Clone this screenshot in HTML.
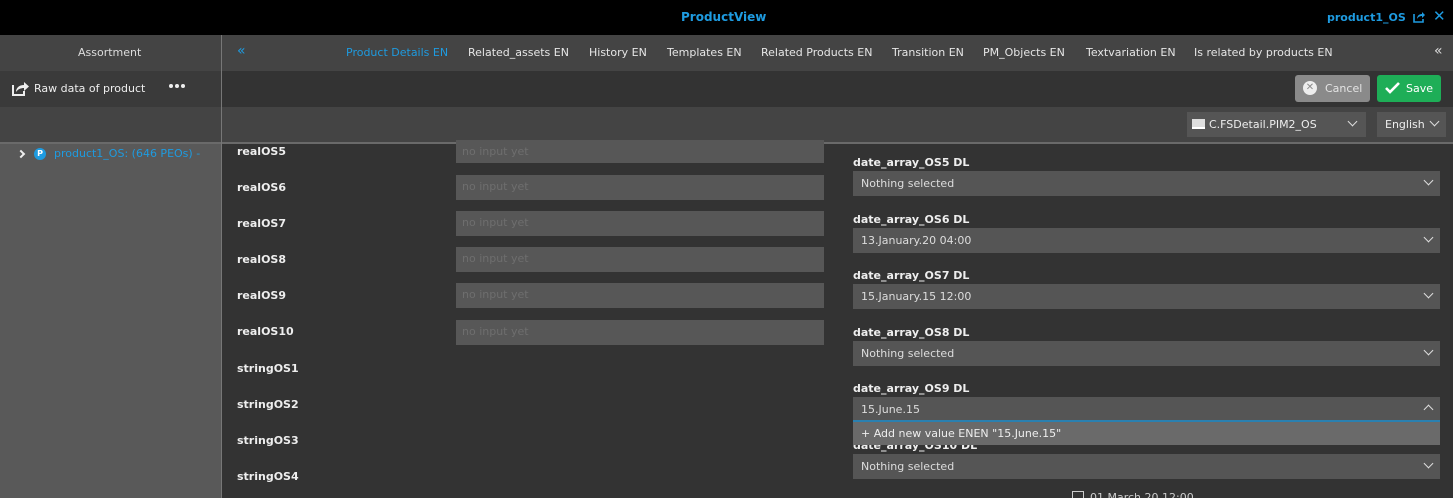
<!DOCTYPE html><html><head><style>
*{margin:0;padding:0;box-sizing:border-box}
html,body{width:1453px;height:498px;overflow:hidden}
body{background:#333;font-family:"DejaVu Sans","Liberation Sans",sans-serif;font-size:11px;color:#ddd;position:relative}
.a{position:absolute}
.lbl{position:absolute;left:237px;font-weight:bold;color:#eee;font-size:11px}
.inp{position:absolute;left:456px;width:368px;height:25px;background:#575757;color:#6e6e6e;padding:5px 6px;font-size:11px}
.rl{position:absolute;left:853px;font-weight:bold;color:#eee}
.sel{position:absolute;left:853px;width:587px;height:25px;background:#555;color:#ddd;padding:6px 8px}
.chev{position:absolute;right:8px;top:6px;width:7px;height:7px;border-right:1.5px solid #ddd;border-bottom:1.5px solid #ddd;transform:rotate(45deg)}
.tab{position:absolute;top:46px;color:#e6e6e6}
</style></head><body>
<div class="a" style="left:0;top:0;width:1453px;height:35px;background:#000"></div>
<div class="a" style="left:681px;top:10px;color:#1e9be0;font-weight:bold;font-size:12px">ProductView</div>
<div class="a" style="left:1327px;top:11px;color:#1e9be0;font-weight:bold">product1_OS</div>
<svg class="a" style="left:1413px;top:11px" width="13" height="12" viewBox="0 0 13 12"><path d="M1 3v8h9V8" fill="none" stroke="#1e9be0" stroke-width="1.6"/><path d="M4 8c0-3 2-5 5-5V1l3 3-3 3V5c-2 0-4 1-5 3z" fill="#1e9be0"/></svg>
<div class="a" style="left:1433px;top:7px;color:#1e9be0;font-weight:bold;font-size:15px">✕</div>
<div class="a" style="left:0;top:35px;width:1453px;height:36px;background:#444"></div>
<div class="a" style="left:0;top:71px;width:221px;height:36px;background:#3a3a3a"></div>
<div class="a" style="left:221px;top:71px;width:1232px;height:36px;background:#333"></div>
<div class="a" style="left:0;top:107px;width:1453px;height:35px;background:#444"></div>
<div class="a" style="left:0;top:142px;width:1453px;height:2px;background:#6a6a6a"></div>
<div class="a" style="left:0;top:144px;width:221px;height:354px;background:#595959"></div>
<div class="a" style="left:221px;top:35px;width:1px;height:463px;background:#777"></div>
<div class="a" style="left:78px;top:46px;color:#ddd">Assortment</div>
<div class="a" style="left:237px;top:43px;color:#1e9be0;font-size:14px">«</div>
<div class="tab" style="left:346px;color:#1e9be0">Product Details EN</div>
<div class="tab" style="left:468px">Related_assets EN</div>
<div class="tab" style="left:589px">History EN</div>
<div class="tab" style="left:667px">Templates EN</div>
<div class="tab" style="left:761px">Related Products EN</div>
<div class="tab" style="left:892px">Transition EN</div>
<div class="tab" style="left:983px">PM_Objects EN</div>
<div class="tab" style="left:1086px">Textvariation EN</div>
<div class="tab" style="left:1194px">Is related by products EN</div>
<div class="a" style="left:1434px;top:43px;color:#ddd;font-size:14px">«</div>
<svg class="a" style="left:12px;top:81px" width="17" height="15" viewBox="0 0 17 15"><path d="M1 4v10h11v-4" fill="none" stroke="#eee" stroke-width="2"/><path d="M4 11c0-4 3-7 8-7V1l5 4.5-5 4.5V7c-3 0-6 1-8 4z" fill="#eee"/></svg>
<div class="a" style="left:34px;top:82px;color:#eee">Raw data of product</div>
<div class="a" style="left:169px;top:84px;width:16px;height:5px"><span class="a" style="left:0;width:4px;height:4px;border-radius:50%;background:#eee"></span><span class="a" style="left:6px;width:4px;height:4px;border-radius:50%;background:#eee"></span><span class="a" style="left:12px;width:4px;height:4px;border-radius:50%;background:#eee"></span></div>
<div class="a" style="left:1295px;top:75px;width:75px;height:27px;background:#8a8a8a;border-radius:3px;color:#e4e4e4;padding:7px 0 0 30px">Cancel</div>
<div class="a" style="left:1303px;top:81px;width:14px;height:14px;border-radius:50%;background:#eee;color:#8a8a8a;font-size:10px;font-weight:bold;text-align:center;line-height:14px">✕</div>
<div class="a" style="left:1377px;top:75px;width:64px;height:27px;background:#1eae57;border-radius:3px;color:#fff;padding:7px 0 0 29px">Save</div>
<svg class="a" style="left:1385px;top:82px" width="15" height="12" viewBox="0 0 15 12"><path d="M1 6l4 4 9-9" fill="none" stroke="#fff" stroke-width="2.6"/></svg>
<div class="a" style="left:1187px;top:112px;width:179px;height:25px;background:#555;color:#eee;padding:6px 0 0 22px">C.FSDetail.PIM2_OS<span class="chev" style="right:10px;top:6px"></span></div>
<div class="a" style="left:1192px;top:119px;width:13px;height:10px;background:#ddd;border-bottom:2px solid #fff"></div>
<div class="a" style="left:1377px;top:112px;width:69px;height:25px;background:#555;color:#eee;padding:6px 0 0 8px">English<span class="chev" style="right:8px;top:6px"></span></div>
<div class="a" style="left:18px;top:151px;width:6px;height:6px;border-right:2px solid #eee;border-bottom:2px solid #eee;transform:rotate(-45deg)"></div>
<div class="a" style="left:34px;top:148px;width:12px;height:12px;border-radius:50%;background:#1e9be0;color:#fff;font-size:8px;text-align:center;line-height:12px;font-weight:bold">P</div>
<div class="a" style="left:54px;top:147px;color:#1e9be0">product1_OS: (646 PEOs) -</div>
<div class="lbl" style="top:145px">realOS5</div><div class="inp" style="top:140px;height:23px">no input yet</div>
<div class="lbl" style="top:181px">realOS6</div><div class="inp" style="top:175px">no input yet</div>
<div class="lbl" style="top:217px">realOS7</div><div class="inp" style="top:211px">no input yet</div>
<div class="lbl" style="top:253px">realOS8</div><div class="inp" style="top:247px">no input yet</div>
<div class="lbl" style="top:289px">realOS9</div><div class="inp" style="top:283px">no input yet</div>
<div class="lbl" style="top:325px">realOS10</div><div class="inp" style="top:320px">no input yet</div>
<div class="lbl" style="top:362px">stringOS1</div>
<div class="lbl" style="top:398px">stringOS2</div>
<div class="lbl" style="top:434px">stringOS3</div>
<div class="lbl" style="top:470px">stringOS4</div>
<div class="rl" style="top:156px">date_array_OS5 DL</div><div class="sel" style="top:171px">Nothing selected<span class="chev"></span></div>
<div class="rl" style="top:213px">date_array_OS6 DL</div><div class="sel" style="top:228px">13.January.20 04:00<span class="chev"></span></div>
<div class="rl" style="top:269px">date_array_OS7 DL</div><div class="sel" style="top:284px">15.January.15 12:00<span class="chev"></span></div>
<div class="rl" style="top:326px">date_array_OS8 DL</div><div class="sel" style="top:341px">Nothing selected<span class="chev"></span></div>
<div class="rl" style="top:382px">date_array_OS9 DL</div>
<div class="rl" style="top:439px">date_array_OS10 DL</div><div class="sel" style="top:454px">Nothing selected<span class="chev"></span></div>
<div class="sel" style="top:397px;border-bottom:2px solid #2a80b0">15.June.15<span class="chev" style="transform:rotate(225deg);top:9px"></span></div>
<div class="a" style="left:853px;top:422px;width:587px;height:23px;background:#6a6a6a;color:#eee;padding:5px 8px">+ Add new value ENEN "15.June.15"</div>
<div class="a" style="left:1072px;top:491px;width:12px;height:12px;border:1px solid #ccc"></div>
<div class="a" style="left:1090px;top:491px;color:#ccc">01 March 20 12:00</div>
</body></html>
